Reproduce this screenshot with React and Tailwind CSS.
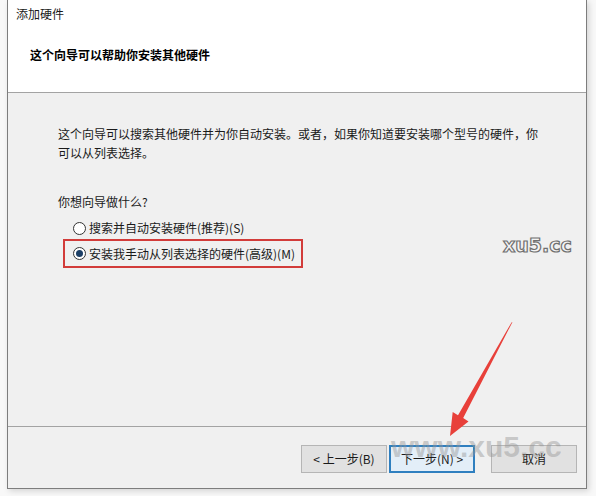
import React from "react";

const font = { fontFamily: '"Noto Sans CJK SC", "Noto Sans", sans-serif' };

function Radio({ checked }) {
  return (
    <span className="flex h-[13px] w-[13px] shrink-0 items-center justify-center rounded-full border border-[#333] bg-white">
      {checked && <span className="h-[7px] w-[7px] rounded-full bg-[#1c3f66]" />}
    </span>
  );
}

function Button({ children, primary }) {
  return (
    <div
      className={
        "flex h-[28px] w-[86px] items-center justify-center text-[12px] text-[#1a1a1a] " +
        (primary
          ? "border-2 border-[#2f7fbf] bg-[#e3eef8]"
          : "border border-[#b5b5b5] bg-[#e1e1e1]")
      }
    >
      {children}
    </div>
  );
}

export default function App() {
  return (
    <div className="relative h-[496px] w-[596px] overflow-hidden bg-[#f8f8f8]" style={font}>
      <div className="ml-[7px] flex h-[489px] w-[580px] flex-col border-x border-b border-[#7d7d7d] shadow-[2px_2px_6px_rgba(0,0,0,0.15)]">
        {/* header */}
        <div className="h-[93px] shrink-0 border-b border-[#a3a3a3] bg-white">
          <div className="pl-[8px] pt-[5px] text-[12px] leading-[18px] text-[#1a1a1a]">添加硬件</div>
          <div className="pl-[22px] pt-[23px] text-[12px] font-bold leading-[18px] text-black">
            这个向导可以帮助你安装其他硬件
          </div>
        </div>

        {/* body */}
        <div className="flex-1 bg-[#f0f0f0] pl-[50px] pt-[29px] text-[12px] text-[#1a1a1a]">
          <div className="pt-[2px] leading-[19px]">
            这个向导可以搜索其他硬件并为你自动安装。或者，如果你知道要安装哪个型号的硬件，你
            <br />
            可以从列表选择。
          </div>
          <div className="pt-[31px] leading-[18px]">你想向导做什么?</div>
          <div className="flex items-center gap-[2px] pl-[15px] pt-[8px] leading-[18px]">
            <Radio />
            <span className="pl-[1px]">搜索并自动安装硬件(推荐)(S)</span>
          </div>
          <div className="ml-[5px] mt-[2px] flex h-[29px] w-[240px] items-center gap-[2px] border-[2.5px] border-[#d23c3a] pl-[8px] leading-[18px]">
            <Radio checked />
            <span className="pl-[1px]">安装我手动从列表选择的硬件(高级)(M)</span>
          </div>
        </div>

        {/* footer */}
        <div className="flex h-[62px] shrink-0 items-start gap-[2px] border-t border-[#a3a3a3] bg-[#f0f0f0] pl-[293px] pt-[18px]">
          <Button>&lt; 上一步(B)</Button>
          <Button primary>下一步(N) &gt;</Button>
          <div className="w-[12px]" />
          <Button>取消</Button>
        </div>
      </div>

      {/* watermark beside the options */}
      <div
        className="absolute left-[503px] top-[233px] text-[19px] font-bold leading-[24px] text-[#f4f4f4] [-webkit-text-stroke:1.2px_#707070]"
        style={{ fontFamily: '"DejaVu Sans", sans-serif' }}
      >
        xu5.cc
      </div>

      {/* watermark over the buttons */}
      <div
        className="absolute left-[391px] top-[429px] text-[30px] font-bold leading-[36px] text-[rgba(150,150,150,0.45)]"
        style={{ fontFamily: '"Liberation Sans", sans-serif' }}
      >
        www.xu5.cc
      </div>

      {/* annotation arrow */}
      <svg className="pointer-events-none absolute left-0 top-0" width="596" height="496" viewBox="0 0 596 496">
        <polygon
          points="512.5,322 511.5,322.5 458,415.3 452.7,412 450,436 468.5,421.5 463.2,418.1"
          fill="#e8403a"
        />
      </svg>
    </div>
  );
}
